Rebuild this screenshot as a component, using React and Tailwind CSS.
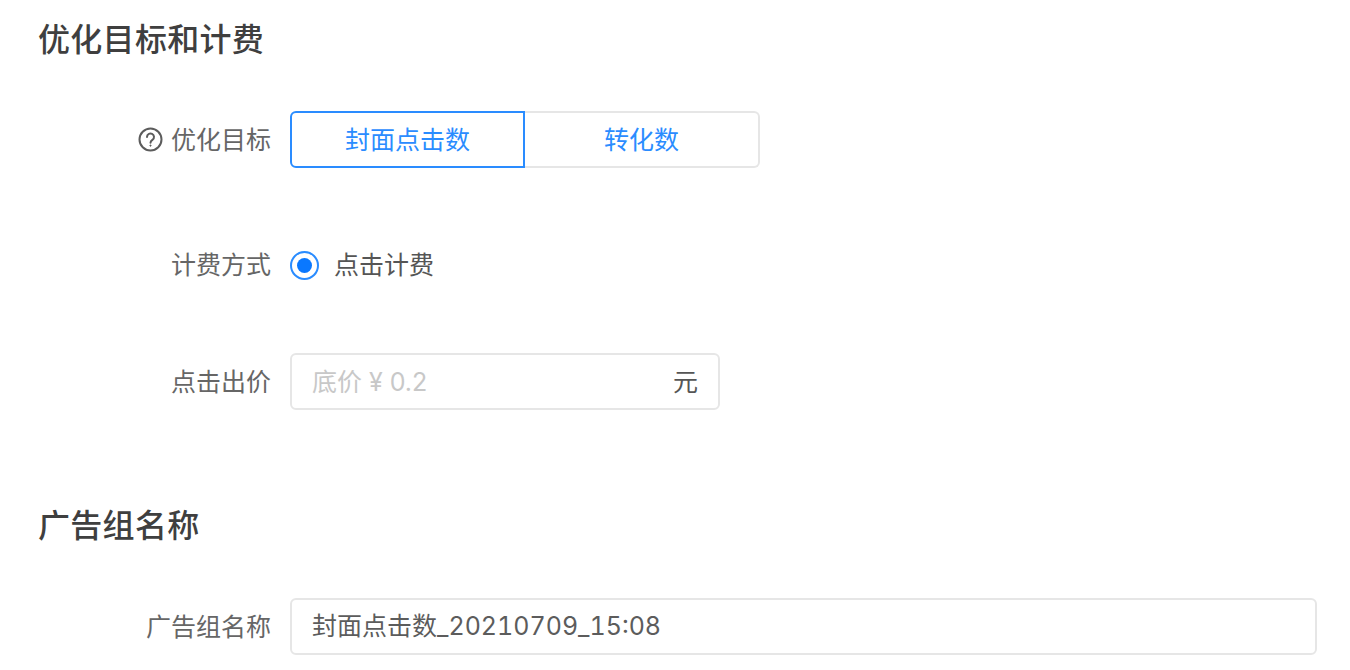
const font = { fontFamily: '"Liberation Sans", "Noto Sans CJK SC", sans-serif' };

function Row({ label, icon, labelClass = 'pt-[2px]', className = '', children }) {
  return (
    <div className={`flex items-center ${className}`}>
      <div className="w-[271px] shrink-0 flex items-center justify-end text-[25px] leading-none text-[#666666]">
        {icon}
        <span className={labelClass}>{label}</span>
      </div>
      <div className="ml-[19px] flex-1 flex items-center min-w-0">{children}</div>
    </div>
  );
}

function HelpIcon() {
  return (
    <svg className="mr-[8px]" width="25" height="25" viewBox="0 0 25 25" fill="none" stroke="#5c5c5c" strokeWidth="2">
      <circle cx="12.5" cy="12.5" r="11" />
      <path d="M9 10a3.5 3.5 0 1 1 5.6 2.8c-1.2.9-2.1 1.5-2.1 3" strokeLinecap="round" />
      <circle cx="12.5" cy="18.6" r="0.6" fill="#5c5c5c" strokeWidth="1" />
    </svg>
  );
}

export default function App() {
  return (
    <div className="w-[1350px] h-[670px] overflow-hidden bg-white pt-[18px] pr-[33px]" style={font}>
      <h2 className="ml-[38px] text-[32px] leading-[44px] font-medium tracking-[0.3px] text-[#3f3f3f]">优化目标和计费</h2>

      <Row label="优化目标" icon={<HelpIcon />} className="mt-[49px]">
        <div className="flex w-[470px] h-[57px] text-[25px]">
          <div className="w-[235px] flex items-center justify-center border-2 border-[#2a8cff] rounded-l-[6px] text-[#2a8cff] pt-[2px]">封面点击数</div>
          <div className="flex-1 flex items-center justify-center border-2 border-l-0 border-[#e6e6e6] rounded-r-[6px] text-[#2a8cff] pt-[2px]">转化数</div>
        </div>
      </Row>

      <Row label="计费方式" labelClass="" className="mt-[69px] h-[56px]">
        <div className="w-[29px] h-[29px] rounded-full border-2 border-[#2a8cff] flex items-center justify-center">
          <div className="w-[15px] h-[15px] rounded-full bg-[#0a78ff]" />
        </div>
        <span className="ml-[15px] text-[25px] leading-none text-[#555555]">点击计费</span>
      </Row>

      <Row label="点击出价" className="mt-[60px]">
        <div className="w-[430px] h-[57px] border-2 border-[#e6e6e6] rounded-[6px] flex items-center justify-between px-[20px] pt-[2px] text-[25px]">
          <span className="text-[#c8c8c8]">底价 <span className="font-['Inter']">¥ 0.2</span></span>
          <span className="text-[#555555]">元</span>
        </div>
      </Row>

      <h2 className="ml-[38px] mt-[94px] text-[32px] leading-[44px] font-medium tracking-[0.3px] text-[#3f3f3f]">广告组名称</h2>

      <Row label="广告组名称" className="mt-[50px]">
        <div className="w-full h-[57px] border-2 border-[#e6e6e6] rounded-[6px] flex items-center pl-[20px] text-[25px] text-[#5c5c5c]">
          封面点击数<span className="font-['Inter'] tabular-nums">_20210709_15:08</span>
        </div>
      </Row>
    </div>
  );
}
